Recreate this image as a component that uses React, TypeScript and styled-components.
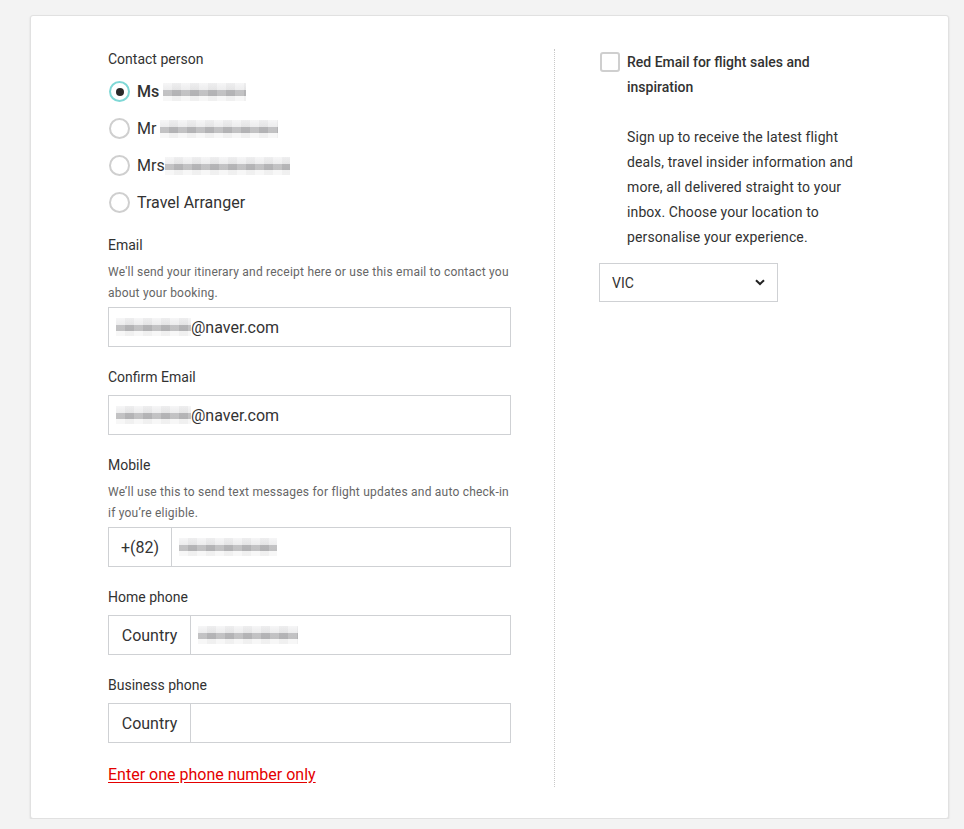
import styled, { createGlobalStyle } from "styled-components";

const Global = createGlobalStyle`
  body {
    margin: 0;
    background: #f3f3f3;
    font-family: Roboto, "Liberation Sans", sans-serif;
    color: #323232;
  }
`;

const Card = styled.div`
  box-sizing: border-box;
  margin: 15px 0 0 30px;
  width: 919px;
  height: 804px;
  background: #fff;
  border: 1px solid #e1e1e1;
  border-radius: 3px;
  box-shadow: 0 1px 2px rgba(0, 0, 0, 0.12);
  padding: 33px 0 31px 77px;
  display: flex;
  align-items: stretch;
`;

const LeftCol = styled.div`
  width: 403px;
  display: flex;
  flex-direction: column;
`;

const Divider = styled.div`
  width: 0;
  border-left: 1px dotted #c8c8c8;
  margin: 0 44px 0 43px;
`;

const RightCol = styled.div`
  width: 262px;
  padding-top: 3px;
`;

const Label = styled.div<{ $top?: number }>`
  font-size: 14px;
  line-height: 20px;
  margin-top: ${(p) => p.$top ?? 0}px;
`;

const Help = styled.div`
  font-size: 12px;
  line-height: 21px;
  color: #666;
  margin-top: 7px;
  letter-spacing: 0.22px;
`;

const RadioList = styled.div`
  display: flex;
  flex-direction: column;
  gap: 16px;
  margin-top: 12px;
`;

const RadioRow = styled.label`
  display: flex;
  align-items: center;
  gap: 7px;
  font-size: 16px;
  line-height: 20px;
  padding-left: 1px;
`;

const RadioCircle = styled.span<{ $on?: boolean }>`
  width: 21px;
  height: 21px;
  box-sizing: border-box;
  border-radius: 50%;
  border: 2px solid ${(p) => (p.$on ? "#7fd8d6" : "#cfcfcf")};
  display: flex;
  align-items: center;
  justify-content: center;
  &::after {
    content: "";
    display: ${(p) => (p.$on ? "block" : "none")};
    width: 8px;
    height: 8px;
    border-radius: 50%;
    background: #2a2a2a;
  }
`;

const RadioText = styled.span<{ $bold?: boolean }>`
  display: flex;
  align-items: center;
  font-weight: ${(p) => (p.$bold ? 500 : 400)};
`;

const Mosaic = styled.span<{ $w: number }>`
  display: inline-block;
  width: ${(p) => p.$w}px;
  height: 18px;
  background:
    repeating-linear-gradient(
      to right,
      rgba(255, 255, 255, 0.15) 0 9px,
      rgba(0, 0, 0, 0.025) 9px 18px
    ),
    linear-gradient(
      to bottom,
      #f4f4f5 0,
      #e9e9ea 40%,
      #b9b9bb 40%,
      #b6b6b8 75%,
      #f6f6f6 75%
    );
  filter: blur(0.4px);
`;

const Field = styled.div<{ $top?: number }>`
  margin-top: ${(p) => p.$top ?? 8}px;
  height: 40px;
  box-sizing: border-box;
  border: 1px solid #cfd1d4;
  display: flex;
  align-items: stretch;
  font-size: 16px;
`;

const Prefix = styled.div<{ $w: number }>`
  width: ${(p) => p.$w}px;
  border-right: 1px solid #cfd1d4;
  display: flex;
  align-items: center;
  justify-content: center;
  color: #333;
`;

const Value = styled.div`
  flex: 1;
  display: flex;
  align-items: center;
  padding-left: 7px;
  color: #333;
`;

const ErrorLink = styled.a`
  margin-top: 22px;
  color: #e40000;
  font-size: 16px;
  text-decoration: underline;
  text-underline-offset: 2px;
  align-self: flex-start;
  cursor: pointer;
`;

const CheckRow = styled.div`
  display: flex;
  gap: 7px;
  align-items: flex-start;
`;

const CheckBox = styled.span`
  width: 20px;
  height: 20px;
  flex: none;
  box-sizing: border-box;
  border: 2px solid #cfcfcf;
  border-radius: 3px;
  margin-left: 1px;
`;

const CheckTitle = styled.div`
  font-size: 14px;
  font-weight: 500;
  line-height: 25px;
  margin-top: -2px;
`;

const Promo = styled.p`
  margin: 25px 0 0 28px;
  font-size: 14px;
  line-height: 25px;
  width: 234px;
  letter-spacing: 0.12px;
`;

const Select = styled.div`
  margin-top: 13px;
  width: 179px;
  height: 39px;
  box-sizing: border-box;
  border: 1px solid #cfd1d4;
  display: flex;
  align-items: center;
  justify-content: space-between;
  padding: 0 12px 0 12px;
  font-size: 14px;
`;

const Chevron = () => (
  <svg width="10" height="7" viewBox="0 0 10 7">
    <path d="M1 1.2 L5 5 L9 1.2" fill="none" stroke="#222" strokeWidth="2" />
  </svg>
);

export default function App() {
  return (
    <>
      <Global />
      <Card>
        <LeftCol>
          <Label>Contact person</Label>
          <RadioList>
            <RadioRow>
              <RadioCircle $on />
              <RadioText $bold>
                Ms&nbsp;<Mosaic $w={83} />
              </RadioText>
            </RadioRow>
            <RadioRow>
              <RadioCircle />
              <RadioText>
                Mr&nbsp;<Mosaic $w={118} />
              </RadioText>
            </RadioRow>
            <RadioRow>
              <RadioCircle />
              <RadioText>
                Mrs<Mosaic $w={125} />
              </RadioText>
            </RadioRow>
            <RadioRow>
              <RadioCircle />
              <RadioText>Travel Arranger</RadioText>
            </RadioRow>
          </RadioList>

          <Label $top={22}>Email</Label>
          <Help>
            We'll send your itinerary and receipt here or use this email to contact you about your booking.
          </Help>
          <Field $top={3}>
            <Value>
              <Mosaic $w={75} />@naver.com
            </Value>
          </Field>

          <Label $top={20}>Confirm Email</Label>
          <Field>
            <Value>
              <Mosaic $w={75} />@naver.com
            </Value>
          </Field>

          <Label $top={20}>Mobile</Label>
          <Help>We’ll use this to send text messages for flight updates and auto check-in if you’re eligible.</Help>
          <Field $top={3}>
            <Prefix $w={62}>+(82)</Prefix>
            <Value>
              <Mosaic $w={98} />
            </Value>
          </Field>

          <Label $top={20}>Home phone</Label>
          <Field>
            <Prefix $w={81}>Country</Prefix>
            <Value>
              <Mosaic $w={100} />
            </Value>
          </Field>

          <Label $top={20}>Business phone</Label>
          <Field>
            <Prefix $w={81}>Country</Prefix>
            <Value />
          </Field>

          <ErrorLink>Enter one phone number only</ErrorLink>
        </LeftCol>
        <Divider />
        <RightCol>
          <CheckRow>
            <CheckBox />
            <CheckTitle>Red Email for flight sales and inspiration</CheckTitle>
          </CheckRow>
          <Promo>
            Sign up to receive the latest flight deals, travel insider information and more, all delivered straight to your inbox. Choose your location to personalise your experience.
          </Promo>
          <Select>
            VIC
            <Chevron />
          </Select>
        </RightCol>
      </Card>
    </>
  );
}
